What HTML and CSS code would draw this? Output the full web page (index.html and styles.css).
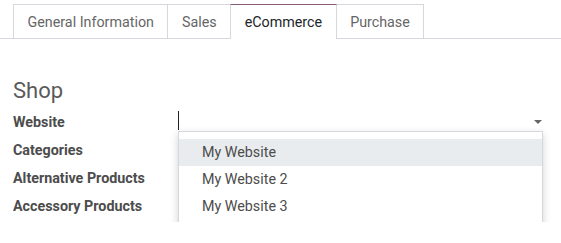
FILE: index.html
```html
<!DOCTYPE html>
<html lang="en">
<head>
  <meta charset="UTF-8">
  <title>Product - eCommerce</title>
  <link rel="stylesheet" href="styles.css">
</head>
<body>

  <ul class="tabs">
    <li class="tab">General Information</li>
    <li class="tab">Sales</li>
    <li class="tab active">eCommerce</li>
    <li class="tab">Purchase</li>
  </ul>

  <div class="sheet">
    <h2 class="group-title">Shop</h2>

    <div class="fields">
      <label class="field-label">Website</label>
      <div class="field-input">
        <div class="select">
          <span class="cursor"></span>
          <span class="caret"></span>
        </div>
        <ul class="dropdown">
          <li class="option selected">My Website</li>
          <li class="option">My Website 2</li>
          <li class="option">My Website 3</li>
        </ul>
      </div>

      <label class="field-label">Categories</label>
      <div class="field-input"></div>

      <label class="field-label">Alternative Products</label>
      <div class="field-input"></div>

      <label class="field-label">Accessory Products</label>
      <div class="field-input"></div>
    </div>
  </div>

</body>
</html>
```

FILE: styles.css
```css
body {
  font-family: Roboto, "Noto Sans", sans-serif;
  font-size: 14.3px;
  color: #4c4c4c;
  background-color: white;
  margin: 0;
}

.tabs {
  display: flex;
  list-style: none;
  margin: 0;
  padding: 4px 0 0 13px;
  border-bottom: 1px solid #d5d9de;
}

.tab {
  height: 33px;
  line-height: 35px;
  padding: 0 13.5px;
  border: 1px solid #d5d9de;
  border-bottom: none;
  margin-right: -1px;
  margin-bottom: -1px;
  color: #666;
  background-color: white;
}

.tab.active {
  color: #212529;
  border-top: 1px solid #875a7b;
  height: 34px;
  position: relative;
}

.sheet {
  padding: 0 13px;
}

.group-title {
  font-size: 22px;
  font-weight: normal;
  color: #5a5a5a;
  margin: 39px 0 6px;
  line-height: 26px;
}

.fields {
  display: grid;
  grid-template-columns: 165px 365px;
  grid-auto-rows: 28px;
}

.field-label {
  font-weight: bold;
  line-height: 24px;
  color: #4c4c4c;
}

.field-input {
  position: relative;
}

.select {
  height: 19px;
  margin-top: 1px;
  position: relative;
}

.cursor {
  position: absolute;
  left: 0;
  top: 0;
  width: 1px;
  height: 19px;
  background-color: #222;
}

.caret {
  position: absolute;
  right: 1px;
  top: 9px;
  border-left: 4px solid transparent;
  border-right: 4px solid transparent;
  border-top: 4px solid #666;
}

.dropdown {
  position: absolute;
  top: 21px;
  left: 0;
  width: 363px;
  list-style: none;
  margin: 0;
  padding: 7px 0 6px;
  background-color: white;
  border: 1px solid #d5d9de;
  box-shadow: 0 3px 8px rgba(0, 0, 0, 0.18);
  z-index: 10;
}

.option {
  height: 27px;
  line-height: 27px;
  padding-left: 23px;
  color: #4c4c4c;
}

.option.selected {
  background-color: #e9ecef;
}
```
